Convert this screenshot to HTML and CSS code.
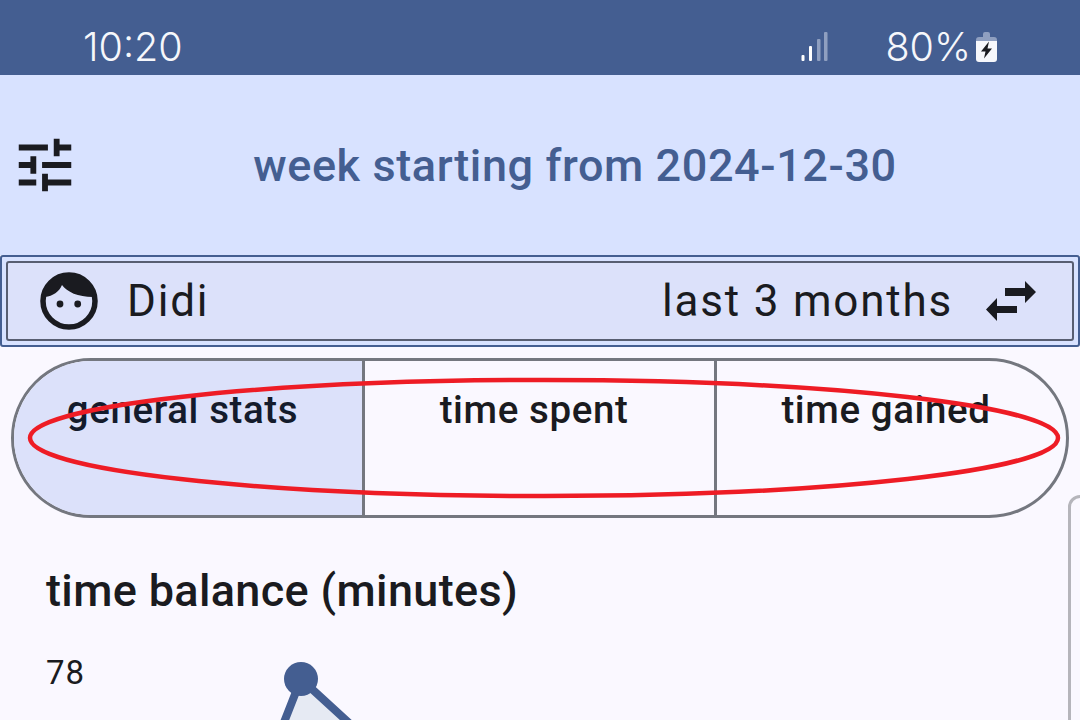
FILE: index.html
```html
<!DOCTYPE html>
<html lang="en">
<head>
    <meta charset="UTF-8">
    <meta name="viewport" content="width=device-width, initial-scale=1.0">
    <title>Week stats</title>
    <link rel="stylesheet" href="styles.css">
</head>
<body>
    <div class="phone">
        <div class="statusBar">
            <span class="clock">10:20</span>
            <div class="statusRight">
                <svg class="signal" width="27" height="29" viewBox="0 0 27 29">
                    <rect x="0.5" y="23" width="3" height="6" rx="1" fill="#fff"/>
                    <rect x="8" y="14" width="3" height="15" rx="1" fill="#fff"/>
                    <rect x="16" y="7" width="3.5" height="22" rx="1" fill="#8f9fc0"/>
                    <rect x="23" y="0" width="3.5" height="29" rx="1" fill="#8f9fc0"/>
                </svg>
                <span class="battery">80%</span>
                <svg class="batteryIcon" width="21" height="30" viewBox="0 0 21 30">
                    <path d="M7 2a2 2 0 0 1 2-2h3a2 2 0 0 1 2 2v3h4a3 3 0 0 1 3 3v4H0V8a3 3 0 0 1 3-3h4z" fill="#8f9fc0"/>
                    <path d="M0 9h21v18a3 3 0 0 1-3 3H3a3 3 0 0 1-3-3z" fill="#f6f7fb"/>
                    <path d="M13 9.5 5 19.5h4.5l-1.5 7 8-10h-4.5z" fill="#1a1b20"/>
                </svg>
            </div>
        </div>

        <header class="topBar">
            <svg class="tuneIcon" width="70" height="70" viewBox="0 0 24 24">
                <path d="M3 17v2h6v-2H3zM3 5v2h10V5H3zm10 16v-2h8v-2h-8v-2h-2v6h2zM7 9v2H3v2h4v2h2V9H7zm14 4v-2H11v2h10zm-6-4h2V7h4V5h-4V3h-2v6z" fill="#1a1b20"/>
            </svg>
            <h1>week starting from 2024-12-30</h1>
        </header>

        <div class="filterOuter">
            <div class="filterInner">
                <svg class="faceIcon" width="60" height="60" viewBox="0 0 60 60">
                    <circle cx="31" cy="30" r="26" fill="none" stroke="#1a1b20" stroke-width="5.5"/>
                    <path d="M31 3C18 3 8 13 7 26c8-1 14-5 17-12 5 7 16 12 31 12C53 13 44 3 31 3z" fill="#1a1b20"/>
                    <circle cx="22" cy="33" r="3.4" fill="#1a1b20"/>
                    <circle cx="39.7" cy="33" r="3.4" fill="#1a1b20"/>
                </svg>
                <span class="person">Didi</span>
                <span class="range">last 3 months</span>
                <svg class="swapIcon" width="50" height="40" viewBox="0 0 50 40">
                    <path d="M19 7h20V0l11 11-11 11v-7H19zM31 25H11v-8L0 28.5 11 40v-8h20z" fill="#1a1b20"/>
                </svg>
            </div>
        </div>

        <div class="tabs">
            <div class="tab active">general stats</div>
            <div class="tab">time spent</div>
            <div class="tab">time gained</div>
        </div>

        <section class="balance">
            <h2>time balance (minutes)</h2>
            <div class="chart">
                <span class="axisLabel">78</span>
                <svg class="plot" width="1080" height="80" viewBox="0 0 1080 80">
                    <path d="M301 31 L262 130 L400 130 Z" fill="#e6eaf3"/>
                    <path d="M301 31 L270 110 M301 31 L372 96" fill="none" stroke="#445e91" stroke-width="8"/>
                    <circle cx="301" cy="31" r="17" fill="#445e91"/>
                </svg>
            </div>
        </section>

        <div class="sidePanel"></div>

        <svg class="annotation" width="1080" height="720" viewBox="0 0 1080 720">
            <ellipse cx="544" cy="438" rx="514" ry="58" fill="none" stroke="#ee1c25" stroke-width="4.5"/>
        </svg>
    </div>
</body>
</html>
```

FILE: styles.css
```css
*{
    margin: 0;
    box-sizing: border-box;
}

body{
    background-color: #faf8ff;
    font-family: Roboto, "Noto Sans", sans-serif;
    color: #1a1b20;
}

.phone{
    position: relative;
    width: 1080px;
    height: 720px;
    overflow: hidden;
}

.statusBar{
    height: 75px;
    background-color: #445e91;
    color: #f6f7fb;
    display: flex;
    align-items: center;
    justify-content: space-between;
    padding: 18px 83px 0;
    font-family: Inter, Roboto, sans-serif;
    font-size: 39.5px;
    font-weight: 300;
}

.statusRight{
    display: flex;
    align-items: center;
}

.signal{
    margin-right: 57px;
}

.batteryIcon{
    margin-left: 5px;
}

.topBar{
    height: 180px;
    background-color: #d8e2ff;
    display: flex;
    align-items: center;
    padding: 0 10px;
}

.topBar h1{
    flex: 1;
    text-align: center;
    font-size: 45px;
    font-weight: 500;
    letter-spacing: 0.6px;
    color: #445e91;
}

.filterOuter{
    height: 92px;
    border: 2px solid #445e91;
    border-radius: 3px;
    background-color: #d8e2ff;
    padding: 4px;
}

.filterInner{
    height: 100%;
    border: 2px solid #585e71;
    border-radius: 3px;
    background-color: #dce1fa;
    display: flex;
    align-items: center;
    padding: 0 36px 0 30px;
    font-size: 44px;
    letter-spacing: 1.8px;
}

.person{
    margin-left: 29px;
    flex: 1;
}

.range{
    margin-right: 33px;
}

.tabs{
    margin: 11px 11px 0;
    height: 160px;
    width: 1058px;
    border: 3px solid #74777f;
    border-radius: 80px;
    display: grid;
    grid-template-columns: 351px 352px 1fr;
    overflow: hidden;
}

.tab{
    text-align: center;
    font-size: 38.5px;
    font-weight: 500;
    letter-spacing: 0.6px;
    padding: 26px 11px 0 0;
    border-right: 3px solid #74777f;
}

.tab:last-child{
    border-right: 0;
}

.tab.active{
    background-color: #dce1fa;
    color: #141b2c;
}

.balance{
    padding: 48px 46px 0;
}

.balance h2{
    font-size: 45px;
    font-weight: 500;
    letter-spacing: 0.35px;
    line-height: 50px;
}

.chart{
    margin-top: 37px;
}

.axisLabel{
    font-size: 33px;
    letter-spacing: 1px;
    line-height: 40px;
    display: block;
}

.plot{
    position: absolute;
    left: 0;
    top: 648px;
}

.sidePanel{
    position: absolute;
    left: 1068px;
    top: 495px;
    width: 40px;
    height: 260px;
    border: 3px solid #b5b5bb;
    border-radius: 12px;
}

.annotation{
    position: absolute;
    left: 0;
    top: 0;
}
```
